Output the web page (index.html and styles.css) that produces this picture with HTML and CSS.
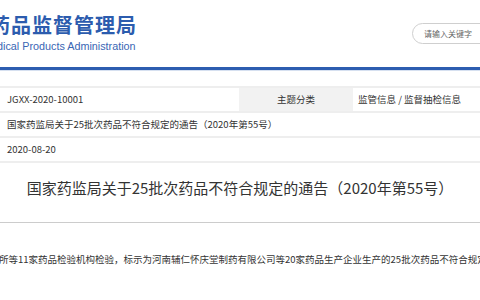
FILE: index.html
```html
<!DOCTYPE html>
<html lang="zh-CN">
<head>
<meta charset="utf-8">
<link rel="stylesheet" href="styles.css">
</head>
<body>
<header class="top">
  <div class="brand">
    <div class="brand-cn">药品监督管理局</div>
    <div class="brand-en">edical Products Administration</div>
  </div>
  <div class="search">请输入关键字</div>
</header>
<section class="info">
  <div class="row row-first">
    <div class="cell">JGXX-2020-10001</div>
    <div class="cell label">主题分类</div>
    <div class="cell value">监管信息 / 监督抽检信息</div>
  </div>
  <div class="row"><div class="cell">国家药监局关于25批次药品不符合规定的通告（2020年第55号）</div></div>
  <div class="row"><div class="cell">2020-08-20</div></div>
</section>
<h1 class="title">国家药监局关于25批次药品不符合规定的通告（2020年第55号）</h1>
<p class="body-text">所等11家药品检验机构检验，标示为河南辅仁怀庆堂制药有限公司等20家药品生产企业生产的25批次药品不符合规定。</p>
</body>
</html>
```

FILE: styles.css
```css
html, body {
  margin: 0;
  padding: 0;
  background: #fff;
  overflow: hidden;
  width: 480px;
  height: 300px;
}
body {
  font-family: "Noto Sans CJK SC", sans-serif;
  color: #333;
}
.top {
  display: flex;
  align-items: flex-start;
  height: 70px;
  box-sizing: border-box;
  padding-top: 14px;
  border-bottom: 3px solid #2d5db0;
  box-shadow: 0 1px 0 #d6e0f0;
}
.brand {
  margin-left: -10px;
  white-space: nowrap;
}
.brand-cn {
  font-size: 20px;
  line-height: 22px;
  font-weight: 700;
  color: #2c5cae;
  letter-spacing: 1px;
}
.brand-en {
  margin-top: 4px;
  margin-left: 1px;
  font-family: "Liberation Sans", Arial, sans-serif;
  font-size: 10.8px;
  line-height: 12px;
  color: #3966b4;
}
.search {
  margin-left: auto;
  margin-right: -52px;
  margin-top: 9px;
  width: 120px;
  height: 21px;
  box-sizing: border-box;
  border: 1px solid #cfcfcf;
  border-radius: 11px;
  padding-left: 11px;
  font-size: 8px;
  line-height: 19px;
  color: #666;
  white-space: nowrap;
}
.info {
  margin-top: 16px;
  border-top: 2px solid #eeeeee;
}
.row {
  display: grid;
  grid-template-columns: 1fr;
  border-bottom: 2px solid #eeeeee;
  height: 23px;
}
.row-first {
  grid-template-columns: 239px 114px 1fr;
}
.cell {
  padding-left: 7px;
  font-size: 9.5px;
  line-height: 23px;
  white-space: nowrap;
  color: #333;
}
.label {
  padding-left: 0;
  text-align: center;
  background: #f2f2f2;
}
.value {
  padding-left: 5px;
}
.title {
  margin: 0;
  padding-top: 14px;
  height: 45px;
  border-bottom: 1px solid #cccccc;
  text-align: center;
  font-size: 15px;
  line-height: 22px;
  font-weight: 400;
  color: #333;
  white-space: nowrap;
}
.body-text {
  margin: 29px 0 0 -1px;
  font-size: 9.5px;
  line-height: 14px;
  color: #333;
  white-space: nowrap;
}
```
